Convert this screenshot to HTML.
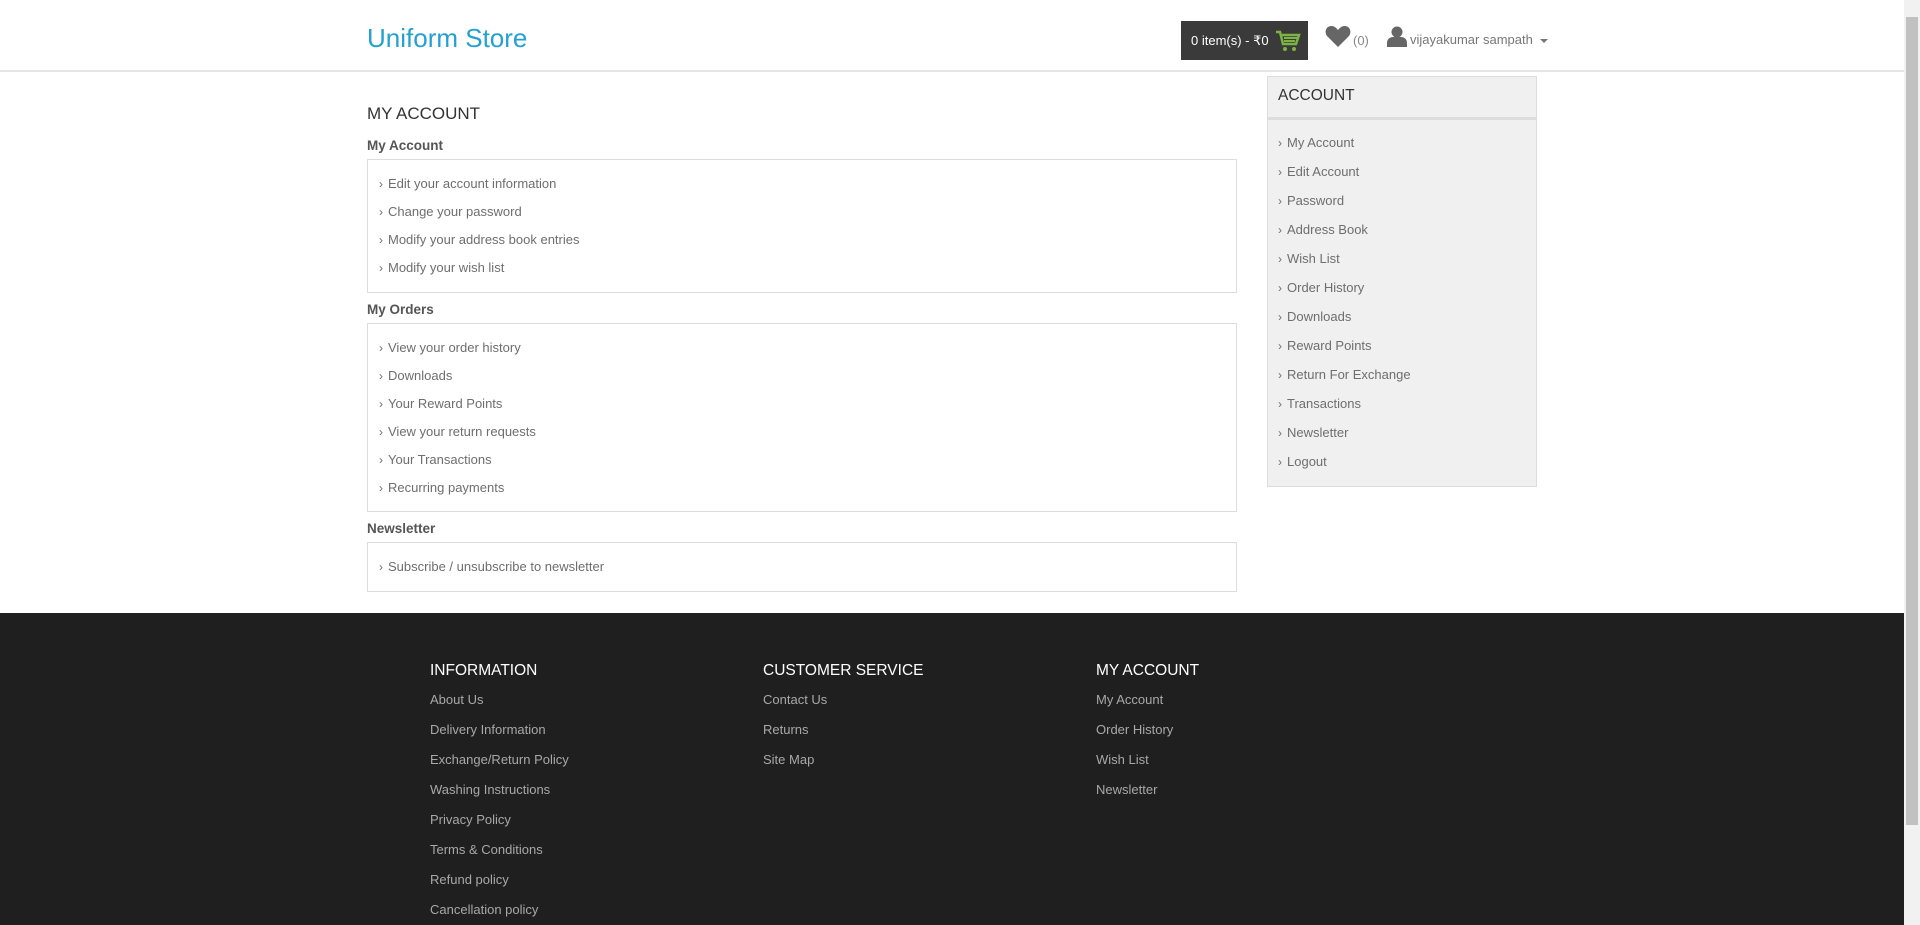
<!DOCTYPE html>
<html><head><meta charset="utf-8"><style>
*{box-sizing:border-box;margin:0;padding:0}
body{width:1920px;height:925px;overflow:hidden;background:#fff;font-family:"Liberation Sans",Arial,sans-serif;position:relative;color:#666}
.abs{position:absolute;white-space:nowrap}
.hdr{position:absolute;left:0;top:0;width:1904px;height:72px;border-bottom:2px solid #e6e6e6}
.logo{left:367px;top:23px;font-size:26px;color:#23a1d1}
.cart{left:1181px;top:21px;width:127px;height:39px;background:#3a3a3a;color:#fff;font-size:13px;line-height:39px;padding-left:10px}
.box{position:absolute;left:367px;width:870px;border:1px solid #ddd}
.it{position:absolute;left:11px;font-size:13px;color:#6e6e6e}
.it:before{content:"›";margin-right:5px;font-size:12px}
.h3{font-size:13.5px;font-weight:bold;color:#555;left:367px}
.side{position:absolute;left:1267px;top:76px;width:270px;height:411px;background:#eff0ef;border:1px solid #ddd}
.side .t{position:absolute;left:10px;top:10px;font-size:15.5px;color:#333}
.side .ln{position:absolute;left:0;top:40px;width:100%;height:3px;background:#ddd}
.sl{position:absolute;left:10px;font-size:13px;color:#6e6e6e}
.sl:before{content:"›";margin-right:5px;font-size:12px}
.foot{position:absolute;left:0;top:613px;width:1904px;height:312px;background:#1f1f1f}
.fh{color:#fff;font-size:15.5px;top:662px}
.fl{color:#a8a8a8;font-size:13px}
.sb{position:absolute;left:1904px;top:0;width:16px;height:925px;background:#f1f1f1}
.sb div{position:absolute;left:2px;top:17px;width:12px;height:808px;background:#c1c1c1}
</style></head><body>
<div class="hdr"></div>
<div class="abs logo">Uniform Store</div>
<div class="abs cart">0 item(s) - ₹0 <svg style="position:absolute;left:94px;top:9px" width="26" height="22" viewBox="0 0 26 22"><path d="M1 2h4l3 12h13l3-9H7" fill="none" stroke="#7cb342" stroke-width="2.5"/><path d="M9 8h13M9 11h11" stroke="#7cb342" stroke-width="2"/><circle cx="10" cy="19" r="2" fill="#7cb342"/><circle cx="19" cy="19" r="2" fill="#7cb342"/></svg></div>
<svg class="abs" style="left:1325px;top:25px" width="26" height="23" viewBox="0 0 26 23"><path d="M13 22L2 11C-1 7 1 1 6.5 1 10 1 12 4 13 5 14 4 16 1 19.5 1 25 1 27 7 24 11Z" fill="#666"/></svg>
<div class="abs" style="left:1353px;top:33px;font-size:13px;color:#888">(0)</div>
<svg class="abs" style="left:1387px;top:26px" width="20" height="21" viewBox="0 0 20 21"><circle cx="10" cy="6" r="5.5" fill="#666"/><path d="M0 21v-4c0-4 3-6 6-6h8c3 0 6 2 6 6v4z" fill="#666"/></svg>
<div class="abs" style="left:1410px;top:32px;font-size:13px;color:#777">vijayakumar sampath</div>
<div class="abs" style="left:1540px;top:39px;width:0;height:0;border-left:4px solid transparent;border-right:4px solid transparent;border-top:4px solid #777"></div>

<div class="abs" style="left:367px;top:104px;font-size:17px;color:#333">MY ACCOUNT</div>
<div class="abs h3" style="top:138px">My Account</div>
<div class="box" style="top:159px;height:134px">
<div class="it" style="top:16px">Edit your account information</div>
<div class="it" style="top:44px">Change your password</div>
<div class="it" style="top:72px">Modify your address book entries</div>
<div class="it" style="top:100px">Modify your wish list</div>
</div>
<div class="abs h3" style="top:302px">My Orders</div>
<div class="box" style="top:323px;height:189px">
<div class="it" style="top:16px">View your order history</div>
<div class="it" style="top:44px">Downloads</div>
<div class="it" style="top:72px">Your Reward Points</div>
<div class="it" style="top:100px">View your return requests</div>
<div class="it" style="top:128px">Your Transactions</div>
<div class="it" style="top:156px">Recurring payments</div>
</div>
<div class="abs h3" style="top:521px">Newsletter</div>
<div class="box" style="top:542px;height:50px">
<div class="it" style="top:16px">Subscribe / unsubscribe to newsletter</div>
</div>

<div class="side"><div class="t">ACCOUNT</div><div class="ln"></div>
<div class="sl" style="top:58px">My Account</div>
<div class="sl" style="top:87px">Edit Account</div>
<div class="sl" style="top:116px">Password</div>
<div class="sl" style="top:145px">Address Book</div>
<div class="sl" style="top:174px">Wish List</div>
<div class="sl" style="top:203px">Order History</div>
<div class="sl" style="top:232px">Downloads</div>
<div class="sl" style="top:261px">Reward Points</div>
<div class="sl" style="top:290px">Return For Exchange</div>
<div class="sl" style="top:319px">Transactions</div>
<div class="sl" style="top:348px">Newsletter</div>
<div class="sl" style="top:377px">Logout</div>
</div>

<div class="foot"></div>
<div class="abs fh" style="left:430px">INFORMATION</div>
<div class="abs fh" style="left:763px">CUSTOMER SERVICE</div>
<div class="abs fh" style="left:1096px">MY ACCOUNT</div>
<div class="abs fl" style="left:430px;top:692px">About Us</div>
<div class="abs fl" style="left:430px;top:722px">Delivery Information</div>
<div class="abs fl" style="left:430px;top:752px">Exchange/Return Policy</div>
<div class="abs fl" style="left:430px;top:782px">Washing Instructions</div>
<div class="abs fl" style="left:430px;top:812px">Privacy Policy</div>
<div class="abs fl" style="left:430px;top:842px">Terms &amp; Conditions</div>
<div class="abs fl" style="left:430px;top:872px">Refund policy</div>
<div class="abs fl" style="left:430px;top:902px">Cancellation policy</div>
<div class="abs fl" style="left:763px;top:692px">Contact Us</div>
<div class="abs fl" style="left:763px;top:722px">Returns</div>
<div class="abs fl" style="left:763px;top:752px">Site Map</div>
<div class="abs fl" style="left:1096px;top:692px">My Account</div>
<div class="abs fl" style="left:1096px;top:722px">Order History</div>
<div class="abs fl" style="left:1096px;top:752px">Wish List</div>
<div class="abs fl" style="left:1096px;top:782px">Newsletter</div>
<div class="sb"><div></div></div>
</body></html>
